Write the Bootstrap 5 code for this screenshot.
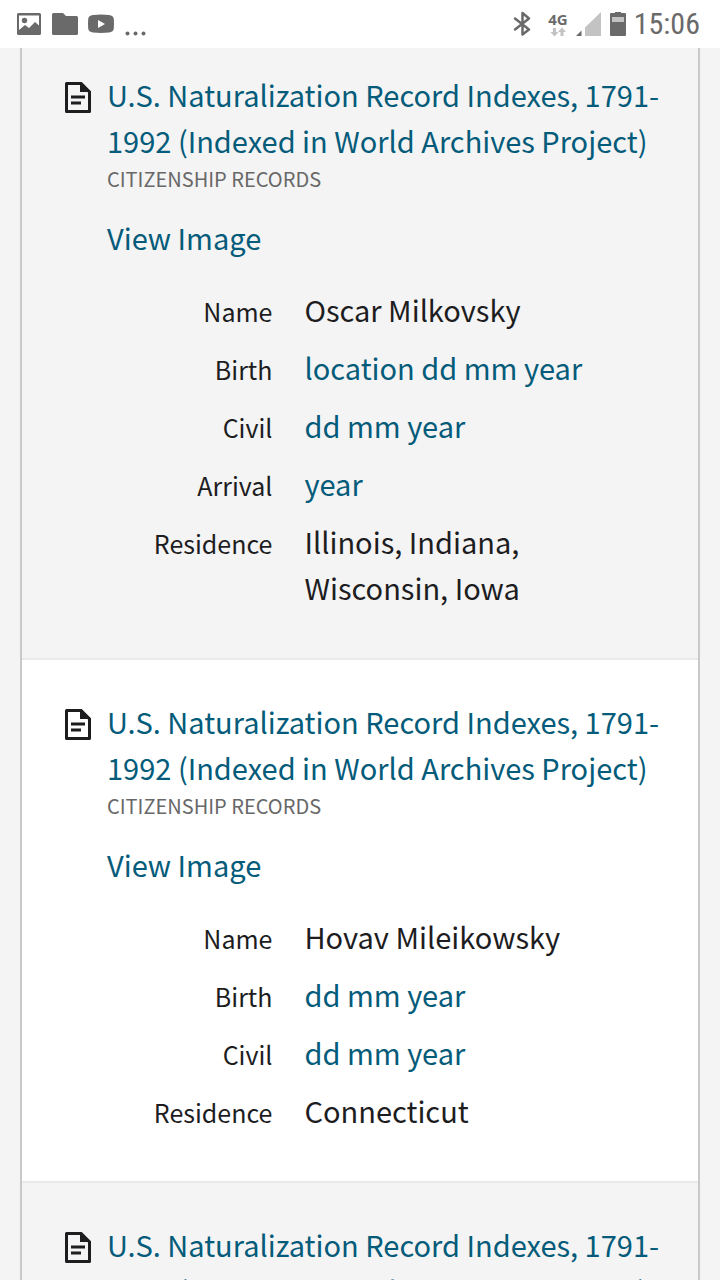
<!DOCTYPE html>
<html lang="en">
<head>
<meta charset="utf-8">
<meta name="viewport" content="width=device-width, initial-scale=1">
<title>Records</title>
<link href="https://cdn.jsdelivr.net/npm/bootstrap@5.3.0/dist/css/bootstrap.min.css" rel="stylesheet">
<style>
  body { background: #f4f4f4; color: #1d1d1f; font-family: "Noto Sans CJK SC", "Noto Sans", sans-serif; font-size: 29px; line-height: 46px; }
  a { color: #045b7a; text-decoration: none; }
  .status-bar { height: 48px; padding: 0 20px 0 16px; color: #6a6a6a; background: #fff; }
  .status-bar svg { display: block; }
  .clock { font: 30px/48px "Roboto Condensed", "Liberation Sans Narrow", Roboto, sans-serif; margin-left: 6px; }
  .network { font: bold 15px/16px "Open Sans", sans-serif; }
  .results { margin: 0 20px; border: solid #c9c9c9; border-width: 0 2px; }
  .record { padding: 38px 35px 36px 42px; border-bottom: 2px solid #e9e9e9; }
  .record:first-child { padding-top: 23px; }
  .record:nth-child(even) { background: #fff; }
  .record-icon { width: 28px; height: 46px; margin-right: 15px; }
  .record-title { font: inherit; margin: 0; }
  .category { font-size: 20px; line-height: 32px; color: #686868; margin: 0 0 19px; }
  .facts { margin: 26px 0 0; }
  .fact { display: grid; grid-template-columns: 6fr 13fr; column-gap: 32px; align-items: baseline; margin-bottom: 12px; }
  .fact dt { font-size: 25px; line-height: 40px; font-weight: 400; text-align: right; }
  .fact dd { margin: 0; }
</style>
</head>
<body class="vh-100 overflow-hidden d-flex flex-column">
<svg class="d-none" aria-hidden="true">
  <symbol id="doc" viewBox="0 0 28 32">
    <path d="M2.500 2.500H17L25.500 11V30.500H2.500Z" fill="none" stroke="#1d1d1f" stroke-width="3" stroke-linejoin="round"/>
    <path d="M16 1h1.500L27 10.500V11H16Z" fill="#1d1d1f"/>
    <path d="M7 16H21M7 22H17" stroke="#1d1d1f" stroke-width="3"/>
  </symbol>
</svg>
<header class="status-bar d-flex align-items-center justify-content-between flex-shrink-0">
  <svg width="136" height="48" viewBox="0 0 136 48" fill="#6a6a6a" aria-hidden="true">
    <path fill-rule="evenodd" d="M2.500 13h21a1.500 1.500 0 0 1 1.500 1.500v19a1.500 1.500 0 0 1-1.500 1.500h-21A1.500 1.500 0 0 1 1 33.500v-19A1.500 1.500 0 0 1 2.500 13ZM3 15.500V30l6-5 4 3 6-6 4 3.500v-10Z"/>
    <circle cx="8.500" cy="20.500" r="2.700"/>
    <path d="M37.500 13H47l3 3h10.500a1.500 1.500 0 0 1 1.500 1.500v16a1.500 1.500 0 0 1-1.500 1.500h-23a1.500 1.500 0 0 1-1.500-1.500v-19a1.500 1.500 0 0 1 1.500-1.500Z"/>
    <path fill-rule="evenodd" d="M77 15q8-.8 16 0 4.500.500 4.800 4 .4 5 0 9.500-.3 3.500-4.800 4-8 .8-16 0-4.500-.5-4.800-4-.4-4.500 0-9.500 .3-3.500 4.800-4ZM82 20v8l7-4Z"/>
    <circle cx="111.500" cy="33.500" r="2"/><circle cx="119.500" cy="33.500" r="2"/><circle cx="127.500" cy="33.500" r="2"/>
  </svg>
  <div class="d-flex align-items-center">
    <svg width="20" height="48" viewBox="0 0 20 48" fill="none" stroke="#6a6a6a" stroke-width="2.500" stroke-linejoin="round" stroke-linecap="round" aria-hidden="true"><path d="M3 18.500 17 29.500 10.500 34.500V13L17 18.500 3 29.500"/></svg>
    <div class="d-flex flex-column align-items-center ms-3 me-2">
      <span class="network">4G</span>
      <svg width="16" height="10" viewBox="0 0 16 10" fill="#c3c3c3" aria-hidden="true"><path d="M3 1h3v4h2.500l-4 4.500-4-4.500H3ZM10.500 9V5H8l4-4.500L16 5h-2.500v4Z"/></svg>
    </div>
    <svg width="52" height="48" viewBox="0 0 52 48" aria-hidden="true">
      <path d="M0 36 5.500 30.500V36Z" fill="#6a6a6a"/><path d="M9 36V27.500L25 12V36Z" fill="#c3c3c3"/>
      <path d="M35 13h4v-1h6v1h4a1 1 0 0 1 1 1v21a1 1 0 0 1-1 1H35a1 1 0 0 1-1-1V14a1 1 0 0 1 1-1Z" fill="#6a6a6a"/><path d="M36 17h12v5H36Z" fill="#c3c3c3"/>
    </svg>
    <time class="clock">15:06</time>
  </div>
</header>
<main class="results flex-grow-1 overflow-hidden">
  <article class="record d-flex align-items-start">
    <svg class="record-icon flex-shrink-0" aria-hidden="true"><use href="#doc" y="10" width="28" height="32"/></svg>
    <div class="flex-grow-1">
      <h2 class="record-title"><a href="#">U.S. Naturalization Record Indexes, 1791-1992 (Indexed in World Archives Project)</a></h2>
      <p class="category text-uppercase">Citizenship Records</p>
      <a href="#">View Image</a>
      <dl class="facts">
        <div class="fact"><dt>Name</dt><dd>Oscar Milkovsky</dd></div>
        <div class="fact"><dt>Birth</dt><dd><a href="#">location dd mm year</a></dd></div>
        <div class="fact"><dt>Civil</dt><dd><a href="#">dd mm year</a></dd></div>
        <div class="fact"><dt>Arrival</dt><dd><a href="#">year</a></dd></div>
        <div class="fact"><dt>Residence</dt><dd>Illinois, Indiana, Wisconsin, Iowa</dd></div>
      </dl>
    </div>
  </article>
  <article class="record d-flex align-items-start">
    <svg class="record-icon flex-shrink-0" aria-hidden="true"><use href="#doc" y="10" width="28" height="32"/></svg>
    <div class="flex-grow-1">
      <h2 class="record-title"><a href="#">U.S. Naturalization Record Indexes, 1791-1992 (Indexed in World Archives Project)</a></h2>
      <p class="category text-uppercase">Citizenship Records</p>
      <a href="#">View Image</a>
      <dl class="facts">
        <div class="fact"><dt>Name</dt><dd>Hovav Mileikowsky</dd></div>
        <div class="fact"><dt>Birth</dt><dd><a href="#">dd mm year</a></dd></div>
        <div class="fact"><dt>Civil</dt><dd><a href="#">dd mm year</a></dd></div>
        <div class="fact"><dt>Residence</dt><dd>Connecticut</dd></div>
      </dl>
    </div>
  </article>
  <article class="record d-flex align-items-start">
    <svg class="record-icon flex-shrink-0" aria-hidden="true"><use href="#doc" y="10" width="28" height="32"/></svg>
    <div class="flex-grow-1">
      <h2 class="record-title"><a href="#">U.S. Naturalization Record Indexes, 1791-1992 (Indexed in World Archives Project)</a></h2>
    </div>
  </article>
</main>
<script src="https://cdn.jsdelivr.net/npm/bootstrap@5.3.0/dist/js/bootstrap.bundle.min.js"></script>
</body>
</html>
